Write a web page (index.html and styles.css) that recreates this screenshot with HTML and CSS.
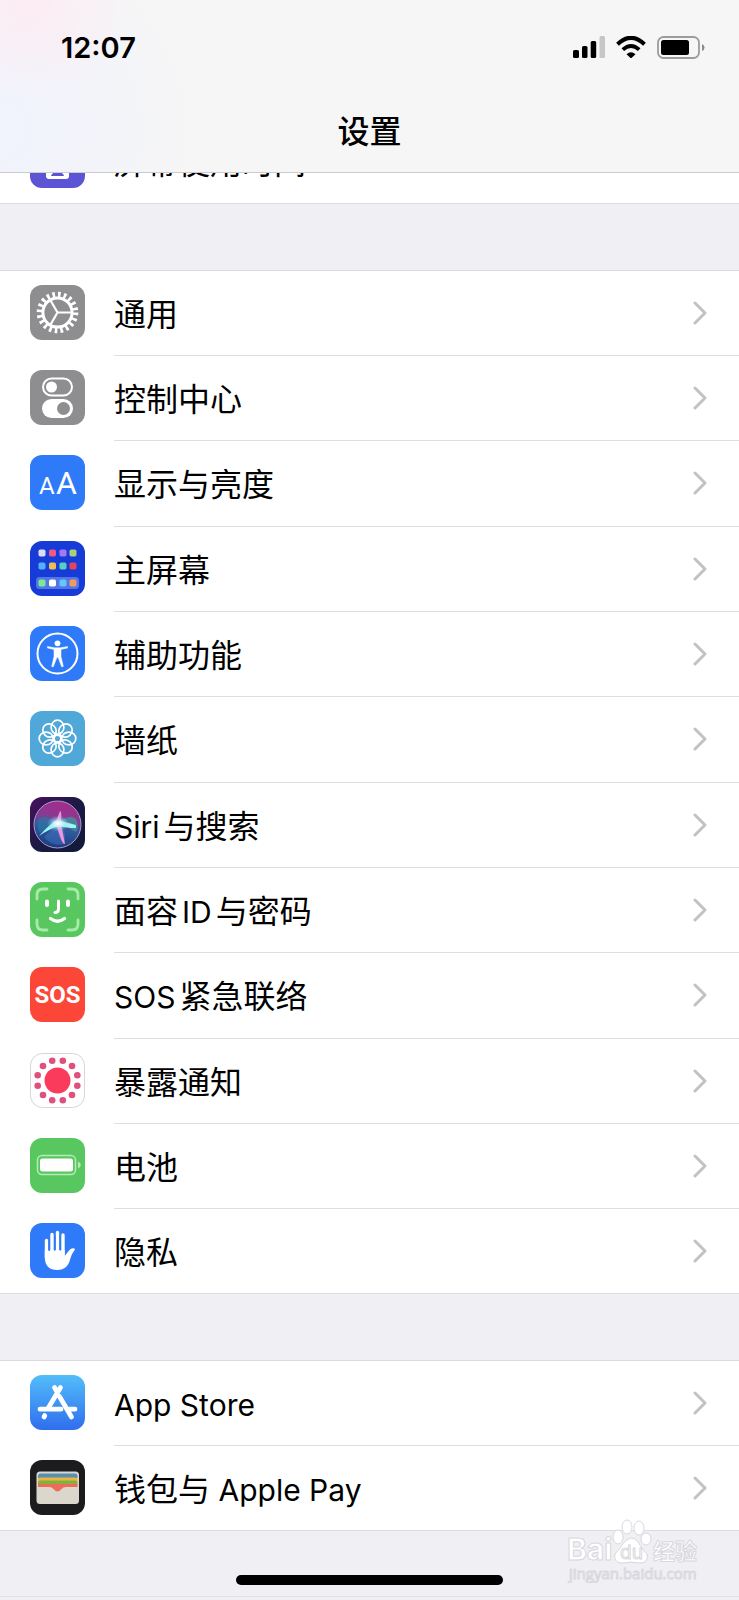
FILE: index.html
```
<!DOCTYPE html>
<html lang="zh-CN">
<head>
    <meta charset="UTF-8" />
    <meta name="viewport" content="width=device-width, initial-scale=1" />
    <title>设置</title>
    <link rel="stylesheet" href="styles.css">
</head>
<body>
    <header>
        <div class="status-bar">
            <span class="clock">12:07</span>
            <div class="status-icons">
                <svg width="32" height="22" viewBox="0 0 32 22">
                    <rect x="0" y="14" width="6" height="8" rx="1.5" />
                    <rect x="9" y="10" width="5.5" height="12" rx="1.5" />
                    <rect x="17.7" y="5" width="5.5" height="17" rx="1.5" />
                    <rect x="26.5" y="0" width="5.5" height="22" rx="1.5" fill="#c6c6c6" />
                </svg>
                <svg width="30" height="22" viewBox="0 0 30 22" fill="none" stroke="#000">
                    <path d="M1.5 8.2Q15-4.6 28.5 8.2" stroke-width="4" />
                    <path d="M6.8 13.6Q15 6.2 23.2 13.6" stroke-width="3.8" />
                    <path d="M10.5 18.2Q15 14.4 19.5 18.2L15 22.5Z" fill="#000" stroke="none" />
                </svg>
                <svg width="48" height="23" viewBox="0 0 48 23">
                    <rect x="1" y="1" width="41" height="21" rx="5.5" fill="none" stroke="#9c9c9c" stroke-width="1.8" />
                    <rect x="4" y="4" width="28" height="15" rx="2.5" />
                    <path d="M45 8q2.5 1 2.5 3.5T45 15z" fill="#8a8a8a" />
                </svg>
            </div>
        </div>
        <h1>设置</h1>
    </header>

    <main>
        <nav class="group">
            <a href="#" class="row">
                <svg class="icon" viewBox="0 0 55 55">
                    <rect width="55" height="55" rx="12" fill="#5b55d6" />
                    <rect x="16" y="30" width="23" height="16" rx="3" fill="#fff" />
                    <path d="M21 43q1-4 6.5-4t6.5 4z" fill="#5b55d6" />
                </svg>
                <span class="label">屏幕使用时间</span>
            </a>
        </nav>

        <nav class="group">
            <a href="#" class="row">
                <svg class="icon" viewBox="0 0 55 55">
                    <rect width="55" height="55" rx="12" fill="#8e8e90" />
                    <g fill="none" stroke="#fff">
                        <circle cx="27.5" cy="27.5" r="18" stroke-width="5.6" stroke-dasharray="2.6 3.055" />
                        <circle cx="27.5" cy="27.5" r="14.6" stroke-width="3" />
                        <path d="M27.5 27.5H42M27.5 27.5L20 14.5M27.5 27.5L20 40.5" stroke-width="2.2" />
                    </g>
                </svg>
                <span class="label">通用</span>
                <svg class="chevron" viewBox="0 0 14 24"><path d="M2 2l10 10L2 22" /></svg>
            </a>
            <a href="#" class="row">
                <svg class="icon" viewBox="0 0 55 55">
                    <rect width="55" height="55" rx="12" fill="#8e8e90" />
                    <rect x="13" y="8.5" width="29" height="17" rx="8.5" fill="none" stroke="#fff" stroke-width="2" />
                    <circle cx="21.5" cy="17" r="5.5" fill="#fff" />
                    <rect x="12" y="29" width="31" height="19" rx="9.5" fill="#fff" />
                    <circle cx="33.5" cy="38.5" r="6.5" fill="#8e8e90" />
                </svg>
                <span class="label">控制中心</span>
                <svg class="chevron" viewBox="0 0 14 24"><path d="M2 2l10 10L2 22" /></svg>
            </a>
            <a href="#" class="row">
                <svg class="icon" viewBox="0 0 55 55">
                    <rect width="55" height="55" rx="12" fill="#2f7af9" />
                    <text class="aa-small" x="9" y="39">A</text>
                    <text class="aa-large" x="26" y="39">A</text>
                </svg>
                <span class="label">显示与亮度</span>
                <svg class="chevron" viewBox="0 0 14 24"><path d="M2 2l10 10L2 22" /></svg>
            </a>
            <a href="#" class="row">
                <svg class="icon" viewBox="0 0 55 55">
                    <rect width="55" height="55" rx="12" fill="#173bd6" />
                    <rect x="6" y="36" width="43" height="12" rx="3.5" fill="#5376e6" />
                    <rect x="8.5" y="8.5" width="7" height="7" rx="1.8" fill="#dcdcf5" />
                    <rect x="19" y="8.5" width="7" height="7" rx="1.8" fill="#f0578a" />
                    <rect x="29.5" y="8.5" width="7" height="7" rx="1.8" fill="#a677f7" />
                    <rect x="39.5" y="8.5" width="7" height="7" rx="1.8" fill="#a8cf7c" />
                    <rect x="8.5" y="21.5" width="7" height="7" rx="1.8" fill="#50b3fb" />
                    <rect x="19" y="21.5" width="7" height="7" rx="1.8" fill="#f3bb54" />
                    <rect x="29.5" y="21.5" width="7" height="7" rx="1.8" fill="#55d2bd" />
                    <rect x="39.5" y="21.5" width="7" height="7" rx="1.8" fill="#e5445d" />
                    <rect x="8.5" y="38.5" width="7" height="7" rx="1.8" fill="#7ee892" />
                    <rect x="19" y="38.5" width="7" height="7" rx="1.8" fill="#fff" />
                    <rect x="29.5" y="38.5" width="7" height="7" rx="1.8" fill="#66c5fa" />
                    <rect x="39.5" y="38.5" width="7" height="7" rx="1.8" fill="#f09a60" />
                </svg>
                <span class="label">主屏幕</span>
                <svg class="chevron" viewBox="0 0 14 24"><path d="M2 2l10 10L2 22" /></svg>
            </a>
            <a href="#" class="row">
                <svg class="icon" viewBox="0 0 55 55">
                    <rect width="55" height="55" rx="12" fill="#2f7af9" />
                    <circle cx="27.5" cy="27.5" r="20" fill="none" stroke="#fff" stroke-width="2" />
                    <circle cx="27.5" cy="17.3" r="2.9" fill="#fff" />
                    <path d="M17.5 20.5l7 1.3h6l7-1.3v1.5l-6.5 1.4v7l2.3 10-1.6.4-3.7-9.6h-1l-3.7 9.6-1.6-.4 2.3-10v-7l-6.5-1.4z" fill="#fff" stroke="#fff" stroke-width=".5" stroke-linejoin="round" />
                </svg>
                <span class="label">辅助功能</span>
                <svg class="chevron" viewBox="0 0 14 24"><path d="M2 2l10 10L2 22" /></svg>
            </a>
            <a href="#" class="row">
                <svg class="icon" viewBox="0 0 55 55">
                    <rect width="55" height="55" rx="12" fill="#50a8d9" />
                    <g fill="none" stroke="#fff" stroke-width="1.7">
                        <ellipse cx="27.5" cy="16.2" rx="6.4" ry="7" />
                        <ellipse cx="27.5" cy="16.2" rx="6.4" ry="7" transform="rotate(45 27.5 27.5)" />
                        <ellipse cx="27.5" cy="16.2" rx="6.4" ry="7" transform="rotate(90 27.5 27.5)" />
                        <ellipse cx="27.5" cy="16.2" rx="6.4" ry="7" transform="rotate(135 27.5 27.5)" />
                        <ellipse cx="27.5" cy="16.2" rx="6.4" ry="7" transform="rotate(180 27.5 27.5)" />
                        <ellipse cx="27.5" cy="16.2" rx="6.4" ry="7" transform="rotate(225 27.5 27.5)" />
                        <ellipse cx="27.5" cy="16.2" rx="6.4" ry="7" transform="rotate(270 27.5 27.5)" />
                        <ellipse cx="27.5" cy="16.2" rx="6.4" ry="7" transform="rotate(315 27.5 27.5)" />
                        <circle cx="27.5" cy="27.5" r="3.4" />
                    </g>
                </svg>
                <span class="label">墙纸</span>
                <svg class="chevron" viewBox="0 0 14 24"><path d="M2 2l10 10L2 22" /></svg>
            </a>
            <a href="#" class="row">
                <svg class="icon" viewBox="0 0 55 55">
                    <defs>
                        <linearGradient id="siri-bg" x1="0" y1="0" x2="1" y2="1">
                            <stop offset="0" stop-color="#48105f" />
                            <stop offset=".5" stop-color="#1b1a45" />
                            <stop offset="1" stop-color="#111a38" />
                        </linearGradient>
                        <linearGradient id="siri-orb" x1=".6" y1="0" x2=".4" y2="1">
                            <stop offset="0" stop-color="#a52b87" />
                            <stop offset=".35" stop-color="#8a3a94" />
                            <stop offset=".6" stop-color="#2d5a9b" />
                            <stop offset="1" stop-color="#1b3a80" />
                        </linearGradient>
                        <radialGradient id="siri-glow">
                            <stop offset="0" stop-color="#fff" />
                            <stop offset=".4" stop-color="#d9f4ff" stop-opacity=".7" />
                            <stop offset="1" stop-color="#60dcec" stop-opacity="0" />
                        </radialGradient>
                    </defs>
                    <rect width="55" height="55" rx="12" fill="url(#siri-bg)" />
                    <circle cx="27.5" cy="27.5" r="23.5" fill="url(#siri-orb)" stroke="#a99bcb" stroke-width="1" />
                    <path d="M28 26Q14 15 8 23Q6 30 10 36Z" fill="#287ba6" opacity=".6" />
                    <path d="M28 25Q40 17 46 22Q50 30 46 35Z" fill="#2fae9c" opacity=".6" />
                    <path d="M28 27Q38 34 34 47Q22 50 14 40Z" fill="#4a7fd0" opacity=".4" />
                    <path d="M25 27L30 14Q32 14 31 26L35 47Q32 48 27 30Z" fill="#ef93dc" />
                    <path d="M9 39Q18 29 25 24L31 24L46 28V31Q36 31 29 29Q19 32 9 39Z" fill="#a3f2f5" />
                    <ellipse cx="28" cy="26.5" rx="11" ry="8" fill="url(#siri-glow)" />
                </svg>
                <span class="label"><span class="latin">Siri</span>与搜索</span>
                <svg class="chevron" viewBox="0 0 14 24"><path d="M2 2l10 10L2 22" /></svg>
            </a>
            <a href="#" class="row">
                <svg class="icon" viewBox="0 0 55 55">
                    <rect width="55" height="55" rx="12" fill="#59c75f" />
                    <path d="M7 17v-4q0-6 6-6h4M38 7h4q6 0 6 6v4M48 38v4q0 6-6 6h-4M17 48h-4q-6 0-6-6v-4" fill="none" stroke="#a8eba9" stroke-width="2.8" stroke-linecap="round" />
                    <g fill="none" stroke="#fff" stroke-linecap="round">
                        <path d="M17 19.5v3.5M38 19.5v3.5" stroke-width="4" />
                        <path d="M28.5 19v8q0 3.5-3.5 3.5" stroke-width="3" />
                        <path d="M20.5 36.5q7 5.5 14 0" stroke-width="3.2" />
                    </g>
                </svg>
                <span class="label">面容<span class="latin latin-mid">ID</span>与密码</span>
                <svg class="chevron" viewBox="0 0 14 24"><path d="M2 2l10 10L2 22" /></svg>
            </a>
            <a href="#" class="row">
                <svg class="icon" viewBox="0 0 55 55">
                    <rect width="55" height="55" rx="12" fill="#fb4638" />
                    <text class="sos" x="27.5" y="36" text-anchor="middle">SOS</text>
                </svg>
                <span class="label"><span class="latin">SOS</span>紧急联络</span>
                <svg class="chevron" viewBox="0 0 14 24"><path d="M2 2l10 10L2 22" /></svg>
            </a>
            <a href="#" class="row">
                <svg class="icon" viewBox="0 0 55 55">
                    <rect x=".5" y=".5" width="54" height="54" rx="12" fill="#fff" stroke="#d6d6d8" />
                    <circle cx="27.5" cy="27.5" r="13" fill="#fb3b5c" />
                    <g fill="#e0507f">
                        <circle cx="22.2" cy="7.7" r="3.3" />
                        <circle cx="32.8" cy="7.7" r="3.3" />
                        <circle cx="42" cy="13" r="3.3" />
                        <circle cx="47.3" cy="22.2" r="3.3" />
                        <circle cx="47.3" cy="32.8" r="3.3" />
                        <circle cx="42" cy="42" r="3.3" />
                        <circle cx="32.8" cy="47.3" r="3.3" />
                        <circle cx="22.2" cy="47.3" r="3.3" />
                        <circle cx="13" cy="42" r="3.3" />
                        <circle cx="7.7" cy="32.8" r="3.3" />
                        <circle cx="7.7" cy="22.2" r="3.3" />
                        <circle cx="13" cy="13" r="3.3" />
                    </g>
                </svg>
                <span class="label">暴露通知</span>
                <svg class="chevron" viewBox="0 0 14 24"><path d="M2 2l10 10L2 22" /></svg>
            </a>
            <a href="#" class="row">
                <svg class="icon" viewBox="0 0 55 55">
                    <rect width="55" height="55" rx="12" fill="#59c75f" />
                    <rect x="7.5" y="17.5" width="38" height="19" rx="4.5" fill="none" stroke="#b5ebb6" stroke-width="1.5" />
                    <rect x="10" y="20.5" width="33" height="13" rx="2.5" fill="#fff" />
                    <path d="M48 23.5q2.8 1 2.8 3.5T48 30.5z" fill="#b5ebb6" />
                </svg>
                <span class="label">电池</span>
                <svg class="chevron" viewBox="0 0 14 24"><path d="M2 2l10 10L2 22" /></svg>
            </a>
            <a href="#" class="row">
                <svg class="icon" viewBox="0 0 55 55">
                    <rect width="55" height="55" rx="12" fill="#2f7af9" />
                    <path d="M16.5 17.5V35M22 11.5V32M27.5 9.5V32M33 12V32" stroke="#fff" stroke-width="3.4" stroke-linecap="round" />
                    <path d="M14.8 27H34.7V33L39 27.5Q41.5 24.5 44.5 25.5Q45.5 26.5 44 28Q41.5 31 40.5 35Q38 47 27.5 47Q14.8 47 14.8 34Z" fill="#fff" />
                    <path d="M19.2 18V27.5M24.8 13V27M30.2 13V27" stroke="#2f7af9" stroke-width="1.5" stroke-linecap="round" />
                </svg>
                <span class="label">隐私</span>
                <svg class="chevron" viewBox="0 0 14 24"><path d="M2 2l10 10L2 22" /></svg>
            </a>
        </nav>

        <nav class="group">
            <a href="#" class="row">
                <svg class="icon" viewBox="0 0 55 55">
                    <defs>
                        <linearGradient id="store-bg" x1="0" y1="0" x2="0" y2="1">
                            <stop offset="0" stop-color="#53bdfa" />
                            <stop offset="1" stop-color="#2f6eee" />
                        </linearGradient>
                    </defs>
                    <rect width="55" height="55" rx="12" fill="url(#store-bg)" />
                    <g fill="none" stroke="#fff" stroke-width="4.8" stroke-linecap="round">
                        <path d="M30.5 12.5L18 33.5M14.8 40.5L14 42M24.5 12.5L27.5 17.5M29.5 21.5L41.5 42" />
                        <path d="M10 34.2H31M39 34.2H45" />
                    </g>
                </svg>
                <span class="label"><span class="latin">App Store</span></span>
                <svg class="chevron" viewBox="0 0 14 24"><path d="M2 2l10 10L2 22" /></svg>
            </a>
            <a href="#" class="row">
                <svg class="icon" viewBox="0 0 55 55">
                    <rect width="55" height="55" rx="12" fill="#1c1c1e" />
                    <rect x="6.5" y="11.5" width="42.5" height="32.5" rx="3.5" fill="#dcd7cd" />
                    <path d="M8 18v-2q0-2.500 2.500-2.500h34.500q2.500 0 2.500 2.500v2z" fill="#5690b5" />
                    <path d="M8 22v-2.500q0-2 2.500-2h34.500q2.500 0 2.500 2v2.500z" fill="#efb43c" />
                    <path d="M8 25v-2.500q0-2 2.500-2h34.500q2.500 0 2.500 2v2.500z" fill="#82b13f" />
                    <path d="M8 27v-3h39.500v3H36q-3 0-4.500 2t-4 2.500q-2.500-.5-4-2.500T19 27z" fill="#ee6b5b" />
                </svg>
                <span class="label">钱包与<span class="latin"> Apple Pay</span></span>
                <svg class="chevron" viewBox="0 0 14 24"><path d="M2 2l10 10L2 22" /></svg>
            </a>
        </nav>
    </main>

    <footer>
        <div class="home-bar"></div>
        <div class="watermark">
            <svg width="136" height="64" viewBox="0 0 136 64">
                <g class="mark">
                    <text class="mark-name" x="0" y="41">Bai</text>
                    <ellipse cx="51" cy="18" rx="5" ry="7" />
                    <ellipse cx="60" cy="8" rx="5" ry="7" />
                    <ellipse cx="72" cy="9" rx="5" ry="7" />
                    <ellipse cx="79" cy="20" rx="5" ry="6" />
                    <path d="M64 19q5 0 9 7t7 9q2 8-6 9-5 0-10-1-5 1-10 1-8-1-6-9 3-3 7-9t9-7z" />
                    <text class="mark-du" x="53" y="40">du</text>
                    <text class="mark-cjk" x="86" y="40">经验</text>
                    <text class="mark-url" x="2" y="60">jingyan.baidu.com</text>
                </g>
            </svg>
        </div>
    </footer>
</body>
</html>
```
FILE: styles.css
```
* {
    box-sizing: border-box;
}
body {
    margin: 0;
    min-height: 100vh;
    display: flex;
    flex-direction: column;
    background: #efeff4;
    color: #000;
    font-family: Inter, 'Noto Sans CJK SC', sans-serif;
}
header {
    position: sticky;
    top: 0;
    z-index: 10;
    height: 173px;
    border-bottom: 1px solid #cbcbcf;
    background:
        radial-gradient(circle at 30px 0, #fdebf2, rgba(253, 235, 242, 0) 100px),
        radial-gradient(circle at 0 130px, #f0f2fd, rgba(240, 242, 253, 0) 200px),
        #f6f6f6;
}
.status-bar {
    display: flex;
    justify-content: space-between;
    align-items: center;
    height: 94px;
    padding: 0 34px 0 61px;
}
.clock {
    font-size: 29px;
    font-weight: 600;
}
.status-icons {
    display: flex;
    align-items: center;
    gap: 11px;
}
h1 {
    margin: 12px 0 0;
    font-size: 32px;
    line-height: 52px;
    font-weight: 500;
    text-align: center;
}
main {
    display: flex;
    flex-direction: column;
    gap: 66px;
    /* list is scrolled up under the header */
    margin-top: -55px;
}
.group {
    background: #fff;
    border-top: 1px solid #dcdce0;
    border-bottom: 1px solid #dcdce0;
}
.row {
    display: flex;
    align-items: flex-start;
    height: 85px;
    padding: 14px 32px 0 30px;
    gap: 29px;
    color: inherit;
    text-decoration: none;
    background: linear-gradient(#dedee0, #dedee0) 114px 100% / 100% 1px no-repeat;
}
.row:nth-child(3n) {
    height: 86px;
}
.row:last-child {
    height: 84px;
    background: none;
}
.icon {
    flex: none;
    width: 55px;
    height: 55px;
}
.label {
    flex: 1;
    font-size: 32px;
    line-height: 60px;
    white-space: nowrap;
}
.latin {
    margin-right: 4px;
    font-size: 30px;
}
.latin-mid {
    margin-left: 4px;
}
.chevron {
    width: 14px;
    height: 24px;
    margin-top: 16px;
    fill: none;
    stroke: #c2c2c5;
    stroke-width: 3;
    stroke-linecap: round;
    stroke-linejoin: round;
}
.aa-small,
.aa-large {
    fill: #fff;
    font-family: Roboto, sans-serif;
    font-size: 24px;
}
.aa-large {
    font-size: 32px;
}
.sos {
    fill: #fff;
    font-family: Roboto, sans-serif;
    font-size: 24px;
    font-weight: 700;
}
footer {
    position: relative;
    flex: 1;
    display: flex;
    justify-content: center;
    align-items: flex-end;
    min-height: 66px;
    margin-bottom: 3px;
    padding-bottom: 11px;
    border-bottom: 1px solid #e3e3e7;
}
.home-bar {
    width: 36%;
    height: 10px;
    border-radius: 5px;
    background: #000;
}
.watermark {
    position: absolute;
    right: 36px;
    bottom: 13px;
}
.watermark svg {
    display: block;
}
.mark {
    fill: #fff;
    stroke: #d8d8dc;
    stroke-width: 1;
}
.mark-name {
    font-size: 30px;
    font-weight: 700;
}
.mark-du {
    font-size: 19px;
}
.mark-cjk {
    font-size: 22px;
    font-weight: 700;
}
.mark-url {
    font-family: 'Open Sans', sans-serif;
    font-size: 15px;
}
```
